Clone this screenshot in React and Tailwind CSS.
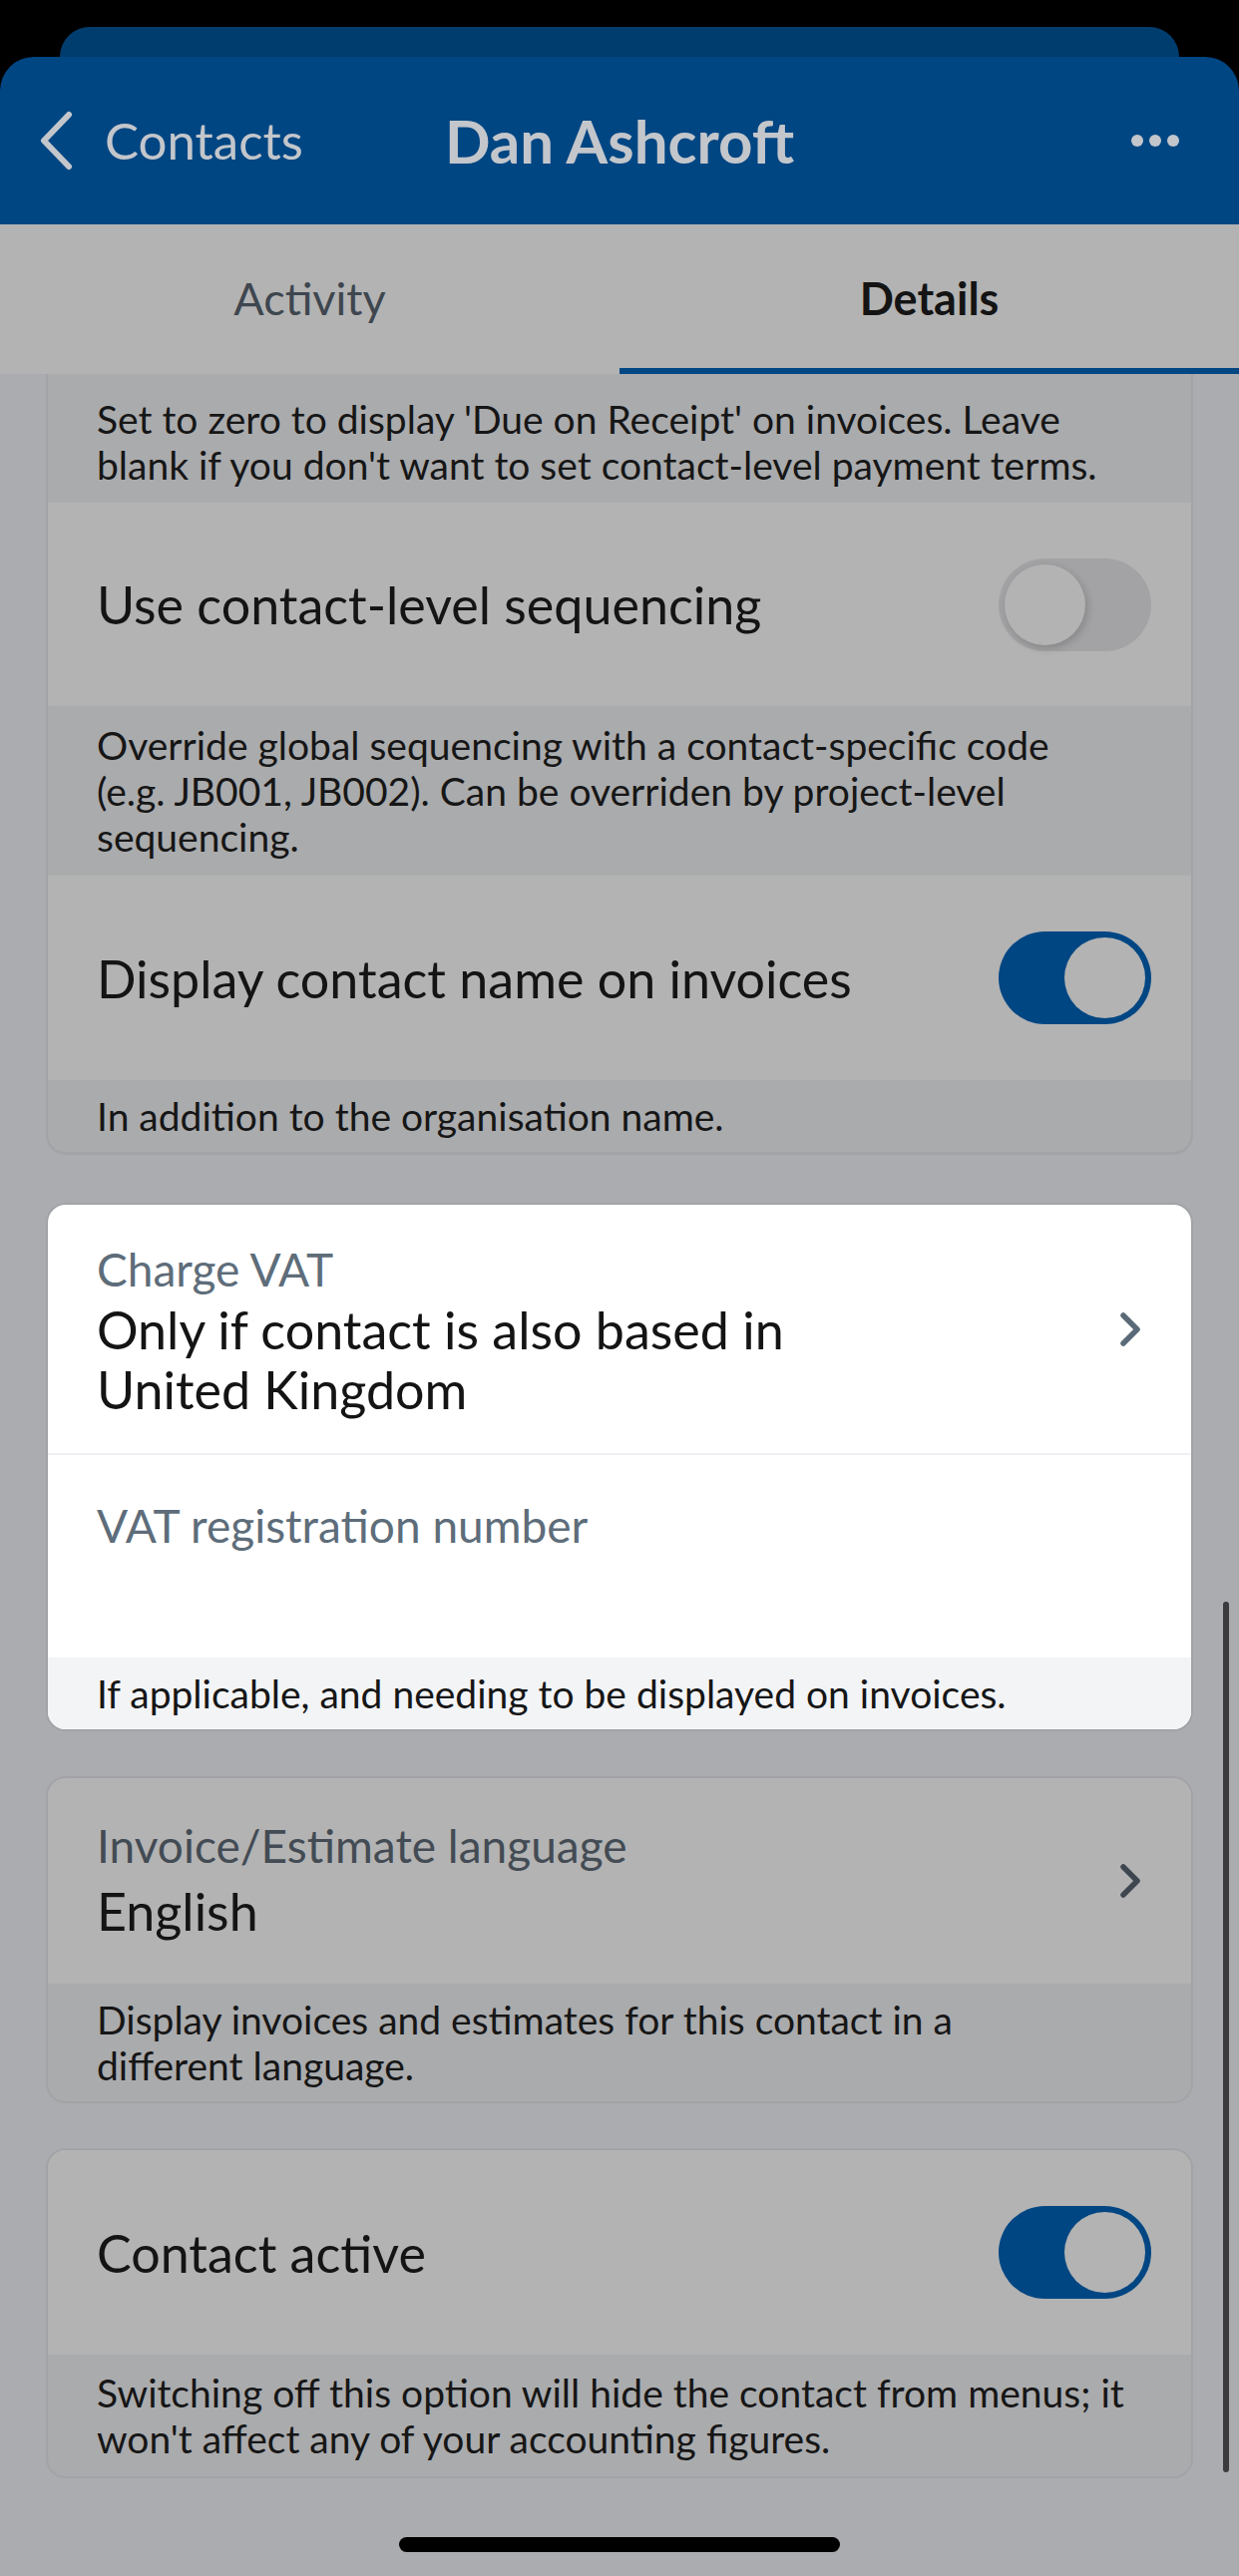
import React from 'react';

// Dimmed palette (sheet overlay over everything except the highlighted card)
const BORDER = 'border-[#a2a3a7]';

function Toggle({ on }) {
    if (on) {
        return (
            <div className="flex h-[93px] w-[153px] shrink-0 items-center justify-end rounded-full bg-[#004683] p-[6px]">
                <div className="h-[81px] w-[81px] rounded-full bg-[#b3b3b3]" />
            </div>
        );
    }
    return (
        <div className="flex h-[93px] w-[153px] shrink-0 items-center rounded-full bg-[#a3a3a5] p-[6px]">
            <div className="h-[81px] w-[81px] rounded-full bg-[#b3b3b3] shadow-[2px_3px_8px_rgba(0,0,0,0.18)]" />
        </div>
    );
}

function Chevron({ color }) {
    return (
        <svg width="22" height="34" viewBox="0 0 22 34" className="shrink-0">
            <path d="M4 3 L18 17 L4 31" fill="none" stroke={color} strokeWidth="5.5" strokeLinecap="round" strokeLinejoin="round" />
        </svg>
    );
}

// helper lines are passed pre-broken so the wrap follows the original
function Helper({ lines, className = '' }) {
    return (
        <div className={`pl-[49px] pr-[40px] text-[39px] leading-[46px] text-[#161616] ${className}`}>
            {lines.map((line) => (
                <div key={line} className="whitespace-nowrap">{line}</div>
            ))}
        </div>
    );
}

function ToggleRow({ title, on, height }) {
    return (
        <div className={`flex items-center justify-between bg-[#b3b3b3] pl-[49px] pr-[40px] ${height}`}>
            <span className="text-[52px] text-[#141414]">{title}</span>
            <Toggle on={on} />
        </div>
    );
}

export default function App() {
    return (
        <div className="relative h-[2583px] w-[1242px] overflow-hidden bg-[#abacb0] font-[family-name:Lato,sans-serif]">
            {/* stacked sheets */}
            <div className="bg-black">
                <div className="h-[57px] px-[60px] pt-[27px]">
                    <div className="h-full rounded-t-[30px] bg-[#003d6f]" />
                </div>
                <header className="grid h-[168px] grid-cols-[1fr_auto_1fr] items-center rounded-t-[34px] bg-[#004683] text-[#c3c6cb]">
                    <div className="flex items-center gap-[31px] pl-[38px]">
                        <svg width="36" height="60" viewBox="0 0 36 60">
                            <path d="M31 4 L6 30 L31 56" fill="none" stroke="#c3c6cb" strokeWidth="6" strokeLinecap="round" strokeLinejoin="round" />
                        </svg>
                        <span className="text-[51px]">Contacts</span>
                    </div>
                    <div className="text-[60px] font-bold">Dan Ashcroft</div>
                    <div className="flex justify-end gap-[6px] pr-[60px]">
                        <span className="h-[12px] w-[12px] rounded-full bg-[#c3c6cb]" />
                        <span className="h-[12px] w-[12px] rounded-full bg-[#c3c6cb]" />
                        <span className="h-[12px] w-[12px] rounded-full bg-[#c3c6cb]" />
                    </div>
                </header>
            </div>

            {/* tabs */}
            <nav className="grid h-[150px] grid-cols-2 bg-[#b3b3b3] text-[45px]">
                <div className="flex items-center justify-center text-[#3e464f]">Activity</div>
                <div className="flex items-center justify-center border-b-[6px] border-[#004683] pt-[6px] font-bold text-[#141414]">
                    Details
                </div>
            </nav>

            <main className="px-[46px]">
                {/* card scrolled under the tabs */}
                <section className={`overflow-hidden rounded-b-[20px] border-x-2 border-b-[3px] ${BORDER} bg-[#aaabad]`}>
                    <Helper
                        className="pt-[22px] pb-[15px]"
                        lines={[
                            "Set to zero to display 'Due on Receipt' on invoices. Leave",
                            "blank if you don't want to set contact-level payment terms.",
                        ]}
                    />
                    <ToggleRow title="Use contact-level sequencing" on={false} height="h-[204px]" />
                    <Helper
                        className="py-[16px]"
                        lines={[
                            'Override global sequencing with a contact-specific code',
                            '(e.g. JB001, JB002). Can be overriden by project-level',
                            'sequencing.',
                        ]}
                    />
                    <ToggleRow title="Display contact name on invoices" on height="h-[205px]" />
                    <Helper className="py-[13px]" lines={['In addition to the organisation name.']} />
                </section>

                {/* highlighted card */}
                <section className={`mt-[48px] overflow-hidden rounded-[20px] border-2 ${BORDER} bg-white`}>
                    <div className="flex h-[249px] items-center justify-between pl-[49px] pr-[50px]">
                        <div>
                            <div className="text-[46px] leading-[60px] text-[#5e6d7a]">Charge VAT</div>
                            <div className="text-[52px] leading-[60px] text-[#141414]">
                                Only if contact is also based in
                                <br />
                                United Kingdom
                            </div>
                        </div>
                        <Chevron color="#5a6a78" />
                    </div>
                    <div className="h-[2px] bg-[#eef1f4]" />
                    <div className="h-[203px] pl-[49px] pt-[41px]">
                        <div className="text-[46px] leading-[60px] text-[#5e6d7a]">VAT registration number</div>
                    </div>
                    <div className="bg-[#f3f4f6] py-[13px] pl-[49px] pr-[40px] text-[39px] leading-[46px] text-[#161616]">
                        If applicable, and needing to be displayed on invoices.
                    </div>
                </section>

                {/* language */}
                <section className={`mt-[45px] overflow-hidden rounded-[20px] border-2 ${BORDER} bg-[#aaabad]`}>
                    <div className="flex h-[206px] items-center justify-between bg-[#b3b3b3] pl-[49px] pr-[50px]">
                        <div>
                            <div className="text-[46px] leading-[60px] text-[#434b54]">Invoice/Estimate language</div>
                            <div className="text-[52px] leading-[70px] text-[#141414]">English</div>
                        </div>
                        <Chevron color="#3e464f" />
                    </div>
                    <Helper
                        className="py-[13px]"
                        lines={['Display invoices and estimates for this contact in a', 'different language.']}
                    />
                </section>

                {/* active */}
                <section className={`mt-[45px] overflow-hidden rounded-[20px] border-2 ${BORDER} bg-[#aaabad]`}>
                    <ToggleRow title="Contact active" on height="h-[205px]" />
                    <Helper
                        className="py-[15px]"
                        lines={[
                            'Switching off this option will hide the contact from menus; it',
                            "won't affect any of your accounting figures.",
                        ]}
                    />
                </section>
            </main>

            {/* scroll indicator + home bar */}
            <div className="absolute left-[1226px] top-[1606px] h-[873px] w-[6px] rounded-full bg-[#3b3b3d]" />
            <div className="absolute left-[400px] top-[2544px] h-[15px] w-[442px] rounded-full bg-black" />
        </div>
    );
}
